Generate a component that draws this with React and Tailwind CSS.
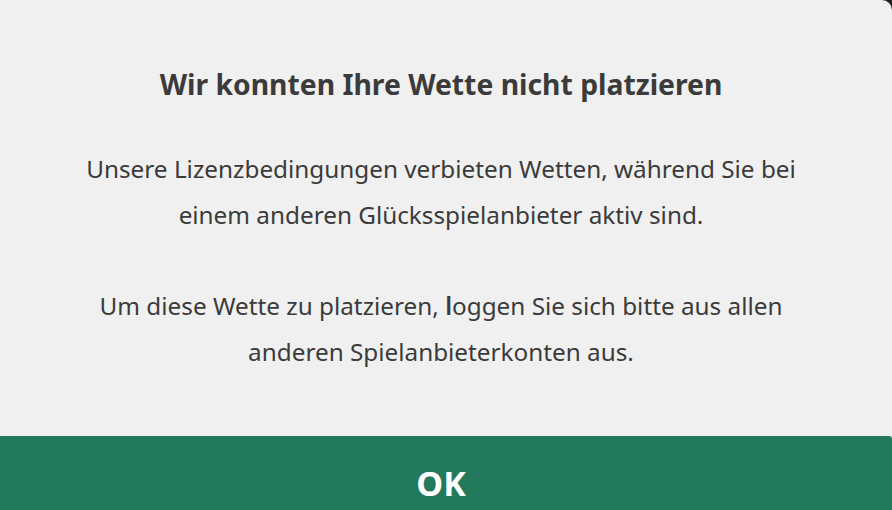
export default function App() {
  return (
    <div className="h-screen w-screen overflow-hidden bg-[#1e1e1e] font-['Noto_Sans',sans-serif]">
      <div className="flex h-full w-full flex-col overflow-hidden rounded-tr-[10px] bg-[#f0f0f0] text-[#3b3b3b]">
        <h1 className="pt-[64px] pr-[10px] text-center text-[28.3px] font-bold leading-[40px]">
          Wir konnten Ihre Wette nicht platzieren
        </h1>
        <div className="mt-[42px] pr-[10px] text-center text-[24.3px] leading-[46px]">
          <p>
            Unsere Lizenzbedingungen verbieten Wetten, während Sie bei
            <br />
            einem anderen Glücksspielanbieter aktiv sind.
          </p>
          <p className="mt-[45px]">
            Um diese Wette zu platzieren, <span className="font-semibold">l</span>oggen Sie sich bitte aus allen
            <br />
            anderen Spielanbieterkonten aus.
          </p>
        </div>
        <button className="mt-[61px] h-[94px] w-full shrink-0 rounded-tr-[3px] bg-[#23795b] pr-[10px] text-[34px] font-bold leading-none text-white">
          OK
        </button>
      </div>
    </div>
  );
}
